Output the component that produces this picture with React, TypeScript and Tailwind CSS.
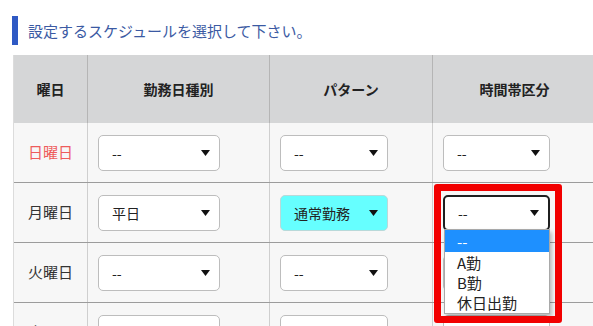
import React from 'react';

const FONT = "font-['Meiryo','Noto_Sans_CJK_JP',sans-serif]";

function Select({ value, cyan = false, focused = false }: { value: string; cyan?: boolean; focused?: boolean }) {
  const tone = focused
    ? 'border-2 border-[#1f1f1f] bg-white'
    : cyan
      ? 'border border-[#b9d9d9] bg-[#66ffff]'
      : 'border border-[#bdbdbd] bg-white';
  return (
    <div className={`flex h-[36px] items-center justify-between rounded-[5px] pl-[13px] pr-[9px] text-[14px] text-[#222] ${tone}`}>
      <span className="leading-none">{value}</span>
      <svg width="9" height="6" viewBox="0 0 9 6" className="shrink-0">
        <path d="M0 0 H9 L4.5 6 Z" fill="#111" />
      </svg>
    </div>
  );
}

const rows = [
  { day: '日曜日', red: true, kind: '--', pattern: '--', band: '--' },
  { day: '月曜日', kind: '平日', pattern: '通常勤務', band: '--', open: true },
  { day: '火曜日', kind: '--', pattern: '--', band: '--' },
  { day: '木曜日', kind: '', pattern: '', band: '' },
];

const options = ['A勤', 'B勤', '休日出勤'];

export default function App() {
  return (
    <div className={`h-[326px] w-[593px] overflow-hidden bg-white ${FONT}`}>
      <div className="ml-[12px] mt-[16px] flex h-[29px] items-center border-l-[6px] border-[#2f59c4] pl-[10px]">
        <span className="text-[15px] leading-none text-[#3b5aa3]">設定するスケジュールを選択して下さい。</span>
      </div>

      <div className="ml-[13px] mt-[10px] w-[582px] border-l border-[#dcdcdc]">
        <div className="grid h-[68px] grid-cols-[74px_182px_163px_163px] bg-[#d5d6d7] text-[14px] font-bold text-[#222]">
          <div className="flex items-center justify-center border-r border-[#b5b5b5]">曜日</div>
          <div className="flex items-center justify-center border-r border-[#b5b5b5]">勤務日種別</div>
          <div className="flex items-center justify-center border-r border-[#b5b5b5]">パターン</div>
          <div className="flex items-center justify-center">時間帯区分</div>
        </div>

        {rows.map((r, i) => (
          <div
            key={i}
            className={`grid h-[59px] grid-cols-[74px_182px_163px_163px] bg-[#f7f7f7] ${i > 0 ? 'box-content border-t border-[#9c9c9c]' : ''}`}
          >
            <div
              className={`flex items-center justify-center border-r border-[#cfcfcf] text-[15px] ${r.red ? 'text-[#ee5c5c]' : 'text-[#333]'}`}
            >
              {r.day}
            </div>
            <div className="flex items-center border-r border-[#cfcfcf] px-[10px]">
              <div className="w-[122px]">
                <Select value={r.kind} />
              </div>
            </div>
            <div className="flex items-center border-r border-[#cfcfcf] px-[10px]">
              <div className="w-[108px]">
                <Select value={r.pattern} cyan={r.pattern === '通常勤務'} />
              </div>
            </div>
            <div className="relative flex items-center px-[10px]">
              <div className="w-[107px]">
                <Select value={r.band} focused={r.open} />
              </div>
              {r.open && (
                <>
                  <div className="absolute left-[11px] top-[46px] z-10 w-[106px] border border-[#a9a9a9] bg-white pb-[1px] text-[15px] text-[#222] shadow-[2px_3px_4px_rgba(0,0,0,0.25)]">
                    <div className="flex h-[22px] items-center bg-[#1e90ff] pl-[12px] text-white">
                      <span className="leading-none">--</span>
                    </div>
                    {options.map((o) => (
                      <div key={o} className="flex h-[20px] items-center pl-[12px]">
                        <span className="leading-none">{o}</span>
                      </div>
                    ))}
                  </div>
                  <div className="pointer-events-none absolute left-[1px] top-[1px] z-20 h-[139px] w-[128px] rounded-[3px] border-[7px] border-[#f20000]" />
                </>
              )}
            </div>
          </div>
        ))}
      </div>
    </div>
  );
}
